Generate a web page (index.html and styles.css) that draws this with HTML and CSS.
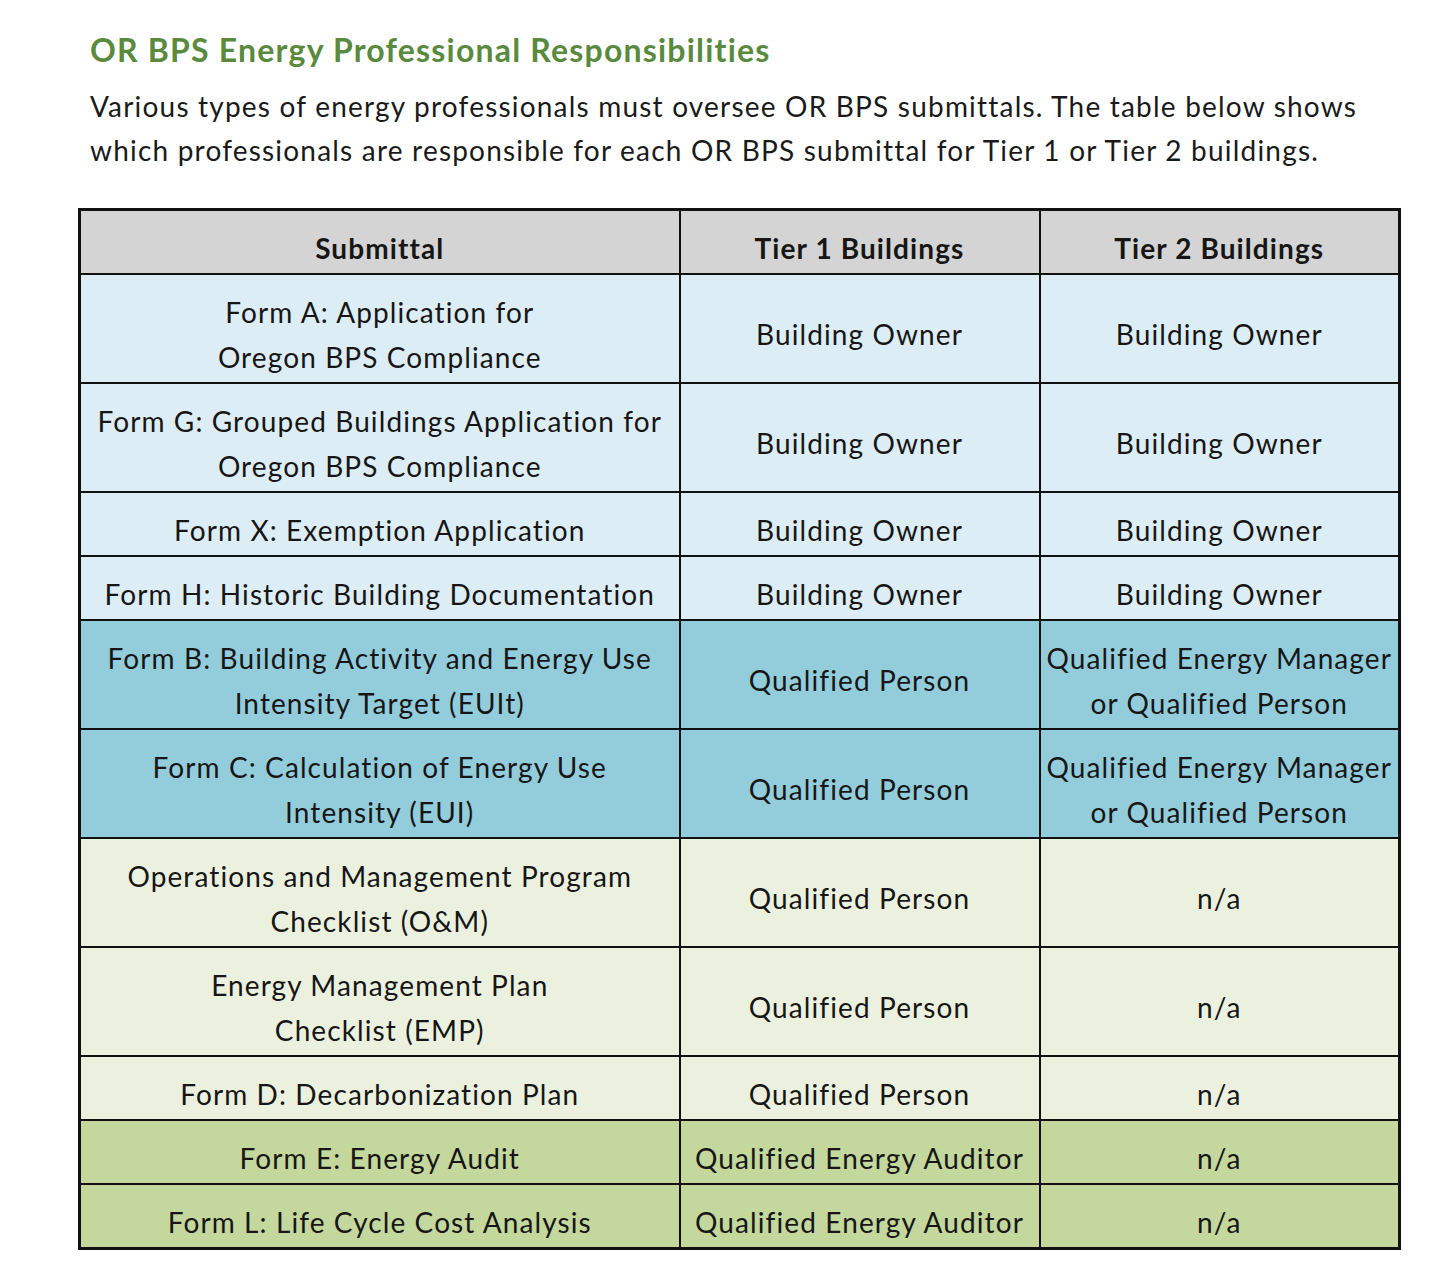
FILE: index.html
```html
<!DOCTYPE html>
<html>
<head>
<meta charset="utf-8">
<link rel="stylesheet" href="styles.css">
</head>
<body>
<div class="page">
  <h1 class="title">OR BPS Energy Professional Responsibilities</h1>
  <p class="intro">Various types of energy professionals must oversee OR BPS submittals. The table below shows<br>which professionals are responsible for each OR BPS submittal for Tier 1 or Tier 2 buildings.</p>
  <table class="grid">
    <colgroup>
      <col class="c1"><col class="c2"><col class="c3">
    </colgroup>
    <thead>
      <tr class="head"><th>Submittal</th><th>Tier 1 Buildings</th><th>Tier 2 Buildings</th></tr>
    </thead>
    <tbody>
      <tr class="lb tall"><td>Form A: Application for<br>Oregon BPS Compliance</td><td>Building Owner</td><td>Building Owner</td></tr>
      <tr class="lb tall"><td>Form G: Grouped Buildings Application for<br>Oregon BPS Compliance</td><td>Building Owner</td><td>Building Owner</td></tr>
      <tr class="lb short"><td>Form X: Exemption Application</td><td>Building Owner</td><td>Building Owner</td></tr>
      <tr class="lb short"><td>Form H: Historic Building Documentation</td><td>Building Owner</td><td>Building Owner</td></tr>
      <tr class="mb tall"><td>Form B: Building Activity and Energy Use<br>Intensity Target (EUIt)</td><td>Qualified Person</td><td>Qualified Energy Manager<br>or Qualified Person</td></tr>
      <tr class="mb tall"><td>Form C: Calculation of Energy Use<br>Intensity (EUI)</td><td>Qualified Person</td><td>Qualified Energy Manager<br>or Qualified Person</td></tr>
      <tr class="lg tall"><td>Operations and Management Program<br>Checklist (O&amp;M)</td><td>Qualified Person</td><td>n/a</td></tr>
      <tr class="lg tall"><td>Energy Management Plan<br>Checklist (EMP)</td><td>Qualified Person</td><td>n/a</td></tr>
      <tr class="lg short"><td>Form D: Decarbonization Plan</td><td>Qualified Person</td><td>n/a</td></tr>
      <tr class="dg short"><td>Form E: Energy Audit</td><td>Qualified Energy Auditor</td><td>n/a</td></tr>
      <tr class="dg short"><td>Form L: Life Cycle Cost Analysis</td><td>Qualified Energy Auditor</td><td>n/a</td></tr>
    </tbody>
  </table>
</div>
</body>
</html>
```

FILE: styles.css
```css
html, body {
  margin: 0;
  padding: 0;
  background: #ffffff;
}
.page {
  padding: 30px 0 0 78px;
  font-family: Lato, "Open Sans", sans-serif;
  color: #161616;
}
.title {
  margin: 0 0 0 12px;
  font-family: Lato, sans-serif;
  font-weight: 700;
  font-size: 32px;
  line-height: 40px;
  color: #5a8a3e;
  letter-spacing: 1.2px;
}
.intro {
  margin: 14px 0 0 12px;
  font-size: 28px;
  line-height: 44px;
  color: #1a1a1a;
  letter-spacing: 1.2px;
}
.grid {
  margin-top: 36px;
  border-collapse: collapse;
  border: 3px solid #111;
  width: 1320px;
  table-layout: fixed;
}
.c1 { width: 600px; }
.c2 { width: 360px; }
.c3 { width: 360px; }
.grid th, .grid td {
  border: 2px solid #111;
  text-align: center;
  vertical-align: middle;
  padding: 12px 0 0 0;
  font-size: 28px;
  line-height: 45px;
  letter-spacing: 1.1px;
  white-space: nowrap;
  overflow: visible;
}
.grid th {
  font-weight: 700;
  background: #d4d4d4;
  height: 50px;
}
.tall td { height: 95px; }
.short td { height: 50px; }
.lb td { background: #dcedf5; }
.mb td { background: #93cddc; }
.lg td { background: #ebf1de; }
.dg td { background: #c4d79c; }
```
